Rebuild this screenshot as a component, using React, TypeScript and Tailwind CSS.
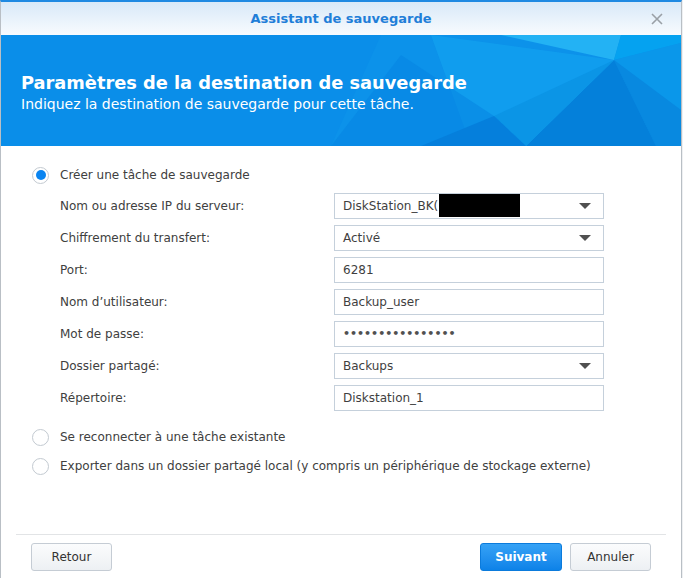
import { useState } from 'react';

const font = { fontFamily: '"DejaVu Sans", Verdana, sans-serif' };

const Radio = ({ checked }: { checked?: boolean }) => (
  <span className="flex h-[17px] w-[17px] shrink-0 items-center justify-center rounded-full border border-[#c3cad1] bg-white">
    {checked && <span className="h-[10px] w-[10px] rounded-full bg-[#0a84f0]" />}
  </span>
);

const Caret = () => (
  <svg width="12" height="6" viewBox="0 0 12 6" className="ml-auto">
    <path d="M0 0h12L6 6z" fill="#505050" />
  </svg>
);

type Row = { label: string; value: string; select?: boolean; secret?: boolean; password?: boolean };

const rows: Row[] = [
  { label: 'Nom ou adresse IP du serveur:', value: 'DiskStation_BK(', select: true, secret: true },
  { label: 'Chiffrement du transfert:', value: 'Activé', select: true },
  { label: 'Port:', value: '6281' },
  { label: 'Nom d’utilisateur:', value: 'Backup_user' },
  { label: 'Mot de passe:', value: '••••••••••••••••', password: true },
  { label: 'Dossier partagé:', value: 'Backups', select: true },
  { label: 'Répertoire:', value: 'Diskstation_1' },
];

const Field = ({ row }: { row: Row }) => (
  <div className="relative flex h-[26px] w-[270px] items-center border border-[#c5d0db] bg-white pl-[8px] pr-[12px] text-[#3f3f3f]">
    <span className={row.password ? 'text-[11px] font-bold text-[#505050]' : ''}>{row.value}</span>
    {row.secret && <span className="absolute left-[104px] top-0 h-[23px] w-[81px] bg-black" />}
    {row.select && <Caret />}
  </div>
);

const Banner = () => (
  <div className="relative h-[111px] overflow-hidden bg-[#0a8ee9]">
    <svg className="absolute inset-0" width="680" height="111" viewBox="0 0 680 111">
      <polygon points="380,0 680,0 680,111 330,111" fill="#0c92ea" />
      <polygon points="430,0 613,25 540,111 470,111" fill="#12a3f0" opacity="0.7" />
      <polygon points="500,0 620,0 613,25" fill="#23b2f4" />
      <polygon points="620,0 680,0 680,8 613,25" fill="#05a2f0" />
      <polygon points="613,25 680,8 680,75" fill="#0a97ea" />
      <polygon points="613,25 680,75 680,111 655,111" fill="#0889e0" />
      <polygon points="613,25 655,111 525,111" fill="#0480da" />
      <polygon points="613,25 525,111 493,81" fill="#0b95e6" />
      <polygon points="400,20 493,81 525,111 330,111" fill="#0786e2" opacity="0.6" />
      <polygon points="493,81 525,111 420,111" fill="#057fdc" />
    </svg>
    <div className="relative pl-[20px] pt-[37px] text-white">
      <h1 className="text-[17.8px] font-bold leading-[22px]">Paramètres de la destination de sauvegarde</h1>
      <p className="mt-[1px] text-[14px] leading-[18px]">Indiquez la destination de sauvegarde pour cette tâche.</p>
    </div>
  </div>
);

const Button = ({ children, primary }: { children: string; primary?: boolean }) => (
  <button
    className={
      primary
        ? 'h-[28px] w-[82px] rounded-[3px] border border-[#0b7bdc] bg-gradient-to-b from-[#35a2f6] to-[#0c82e8] text-[12px] font-bold text-white'
        : 'h-[28px] w-[81px] rounded-[3px] border border-[#c5ccd4] bg-gradient-to-b from-[#fbfcfd] to-[#edf0f3] text-[12px] text-[#333]'
    }
  >
    {children}
  </button>
);

export default function App() {
  const [choice] = useState(0);
  return (
    <div className="flex h-[578px] w-[683px] bg-[#eef0f2] text-[12px]" style={font}>
      <div className="flex h-full w-[682px] flex-col border-x border-t-2 border-x-[#b9bfc5] border-t-[#1f8ae2] bg-white">
        <div className="relative flex h-[33px] items-center justify-center bg-gradient-to-b from-[#d8e9f8] to-[#f8fbfe]">
          <span className="text-[13px] font-bold text-[#1f7ed8]">Assistant de sauvegarde</span>
          <svg className="absolute right-[18px] top-[11px]" width="12" height="12" viewBox="0 0 12 12">
            <path d="M1 1l10 10M11 1L1 11" stroke="#9aa0a6" strokeWidth="1.6" />
          </svg>
        </div>
        <Banner />
        <div className="flex flex-1 flex-col pl-[31px] pt-[20px] text-[#404040]">
          <label className="flex h-[18px] items-center gap-[11px]">
            <Radio checked={choice === 0} />
            <span>Créer une tâche de sauvegarde</span>
          </label>
          <div className="mt-[9px] flex flex-col gap-[6px] pl-[28px]">
            {rows.map((r) => (
              <div key={r.label} className="flex items-center">
                <span className="w-[274px]">{r.label}</span>
                <Field row={r} />
              </div>
            ))}
          </div>
          <label className="mt-[17px] flex h-[18px] items-center gap-[11px]">
            <Radio />
            <span>Se reconnecter à une tâche existante</span>
          </label>
          <label className="mt-[11px] flex h-[18px] items-center gap-[11px]">
            <Radio />
            <span>Exporter dans un dossier partagé local (y compris un périphérique de stockage externe)</span>
          </label>
        </div>
        <div className="mx-[15px] border-t border-[#e2e4e6]" />
        <div className="flex h-[43px] items-start px-[30px] pt-[8px]">
          <Button>Retour</Button>
          <div className="ml-auto flex gap-[8px]">
            <Button primary>Suivant</Button>
            <Button>Annuler</Button>
          </div>
        </div>
      </div>
    </div>
  );
}
